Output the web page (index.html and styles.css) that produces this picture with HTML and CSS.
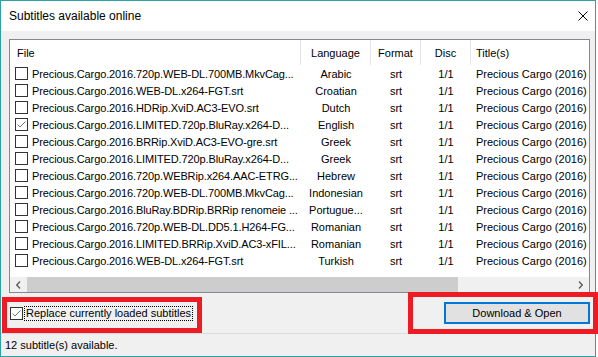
FILE: index.html
```
<!DOCTYPE HTML>
<html>
<head>
<meta http-equiv="Content-Type" content="text/html; charset=utf-8">
<title>Subtitles available online</title>
<link rel="stylesheet" href="styles.css">
</head>

<body>
<div id="window">
	<div id="titlebar">
		<span class="title">Subtitles available online</span>
		<svg class="close" width="10" height="10" viewBox="0 0 10 10"><path d="M0.5 0.5L9.5 9.5M9.5 0.5L0.5 9.5" stroke="#000" stroke-width="1" fill="none"/></svg>
	</div>
	<div id="content">
		<div id="list">
			<div class="head">
				<div class="c1">File</div>
				<div class="c2">Language</div>
				<div class="c3">Format</div>
				<div class="c4">Disc</div>
				<div class="c5">Title(s)</div>
			</div>
			<div class="rows">
				<div class="row"><div class="c1"><span class="box"></span><span class="name">Precious.Cargo.2016.720p.WEB-DL.700MB.MkvCag...</span></div><div class="c2">Arabic</div><div class="c3">srt</div><div class="c4">1/1</div><div class="c5">Precious Cargo (2016)</div></div>
				<div class="row"><div class="c1"><span class="box"></span><span class="name">Precious.Cargo.2016.WEB-DL.x264-FGT.srt</span></div><div class="c2">Croatian</div><div class="c3">srt</div><div class="c4">1/1</div><div class="c5">Precious Cargo (2016)</div></div>
				<div class="row"><div class="c1"><span class="box"></span><span class="name">Precious.Cargo.2016.HDRip.XviD.AC3-EVO.srt</span></div><div class="c2">Dutch</div><div class="c3">srt</div><div class="c4">1/1</div><div class="c5">Precious Cargo (2016)</div></div>
				<div class="row"><div class="c1"><span class="box"><svg width="11" height="11" viewBox="0 0 11 11"><path d="M1.5 5.5L4 8L9.5 2.5" stroke="#777" stroke-width="1" fill="none"/></svg></span><span class="name">Precious.Cargo.2016.LIMITED.720p.BluRay.x264-D...</span></div><div class="c2">English</div><div class="c3">srt</div><div class="c4">1/1</div><div class="c5">Precious Cargo (2016)</div></div>
				<div class="row"><div class="c1"><span class="box"></span><span class="name">Precious.Cargo.2016.BRRip.XviD.AC3-EVO-gre.srt</span></div><div class="c2">Greek</div><div class="c3">srt</div><div class="c4">1/1</div><div class="c5">Precious Cargo (2016)</div></div>
				<div class="row"><div class="c1"><span class="box"></span><span class="name">Precious.Cargo.2016.LIMITED.720p.BluRay.x264-D...</span></div><div class="c2">Greek</div><div class="c3">srt</div><div class="c4">1/1</div><div class="c5">Precious Cargo (2016)</div></div>
				<div class="row"><div class="c1"><span class="box"></span><span class="name">Precious.Cargo.2016.720p.WEBRip.x264.AAC-ETRG...</span></div><div class="c2">Hebrew</div><div class="c3">srt</div><div class="c4">1/1</div><div class="c5">Precious Cargo (2016)</div></div>
				<div class="row"><div class="c1"><span class="box"></span><span class="name">Precious.Cargo.2016.720p.WEB-DL.700MB.MkvCag...</span></div><div class="c2">Indonesian</div><div class="c3">srt</div><div class="c4">1/1</div><div class="c5">Precious Cargo (2016)</div></div>
				<div class="row"><div class="c1"><span class="box"></span><span class="name">Precious.Cargo.2016.BluRay.BDRip.BRRip renomeie ...</span></div><div class="c2">Portugue...</div><div class="c3">srt</div><div class="c4">1/1</div><div class="c5">Precious Cargo (2016)</div></div>
				<div class="row"><div class="c1"><span class="box"></span><span class="name">Precious.Cargo.2016.720p.WEB-DL.DD5.1.H264-FG...</span></div><div class="c2">Romanian</div><div class="c3">srt</div><div class="c4">1/1</div><div class="c5">Precious Cargo (2016)</div></div>
				<div class="row"><div class="c1"><span class="box"></span><span class="name">Precious.Cargo.2016.LIMITED.BRRip.XviD.AC3-xFIL...</span></div><div class="c2">Romanian</div><div class="c3">srt</div><div class="c4">1/1</div><div class="c5">Precious Cargo (2016)</div></div>
				<div class="row"><div class="c1"><span class="box"></span><span class="name">Precious.Cargo.2016.WEB-DL.x264-FGT.srt</span></div><div class="c2">Turkish</div><div class="c3">srt</div><div class="c4">1/1</div><div class="c5">Precious Cargo (2016)</div></div>
			</div>
			<div class="hscroll">
				<div class="arrow"><svg width="5" height="8" viewBox="0 0 5 8"><path d="M4 0.5L0.8 4L4 7.5" stroke="#606060" stroke-width="1.4" fill="none"/></svg></div>
				<div class="thumb"></div>
				<div class="track"></div>
				<div class="arrow"><svg width="5" height="8" viewBox="0 0 5 8"><path d="M1 0.5L4.2 4L1 7.5" stroke="#606060" stroke-width="1.4" fill="none"/></svg></div>
			</div>
		</div>
		<div id="panel">
			<div class="replace">
				<span class="box"><svg width="11" height="11" viewBox="0 0 11 11"><path d="M1.5 5.5L4 8L9.5 2.5" stroke="#777" stroke-width="1" fill="none"/></svg></span>
				<span class="label">Replace currently loaded subtitles</span>
			</div>
			<div class="btn">Download &amp; Open</div>
		</div>
	</div>
	<div id="status">12 subtitle(s) available.</div>
	<div class="mark markLeft"></div>
	<div class="mark markRight"></div>
</div>
</body>
</html>
```

FILE: styles.css
```
/* reset start */
html,body{ margin:0; padding:0; background:#fff;}
body{ font:11px "Liberation Sans", Arial, sans-serif; color:#000;}
/* reset end */

/* frame start */
#window{ width:596px; height:357px; box-sizing:border-box; border:1px solid #2ba1a6; display:flex; flex-direction:column; position:relative; background:#f0f0f0;}
#titlebar{ height:30px; flex:none; background:#fff; display:flex; align-items:center; justify-content:space-between; padding:0 7px 0 8px;}
#titlebar .title{ font-size:12px;}
#content{ flex:none; height:302px; box-sizing:border-box; padding:8px 5px 0 8px; display:flex; flex-direction:column;}
#status{ flex:1; border-top:1px solid #dadada; padding-left:4px; display:flex; align-items:center;}
/* frame end */

/* list start */
#list{ height:254px; flex:none; box-sizing:border-box; border:1px solid #828790; background:#fff; display:flex; flex-direction:column; overflow:hidden;}
#list .head{ height:25px; flex:none; display:flex; align-items:center;}
#list .head > div{ height:100%; display:flex; align-items:center; box-sizing:border-box; border-right:1px solid #e5e5e5;}
#list .rows{ flex:1;}
#list .row{ height:17px; display:flex; align-items:center; white-space:nowrap;}
#list .c1{ width:291px; flex:none; display:flex; align-items:center; overflow:hidden;}
#list .c2{ width:70px; flex:none; justify-content:center; text-align:center;}
#list .c3{ width:50px; flex:none; justify-content:center; text-align:center;}
#list .c4{ width:50px; flex:none; justify-content:center; text-align:center;}
#list .c5{ flex:none; width:140px; padding-left:5px; box-sizing:border-box;}
#list .head .c1{ padding-left:7px;}
#list .head .c5{ border-right:none;}
#list .row .c1{ padding-left:5px; box-sizing:border-box;}
#list .row .c1 .name{ margin-left:4px; flex:1; min-width:0; overflow:hidden; text-overflow:ellipsis; letter-spacing:-0.12px;}
.box{ width:13px; height:13px; flex:none; box-sizing:border-box; border:1px solid #333; background:#fff; display:flex; align-items:center; justify-content:center;}
#list .hscroll{ height:15px; flex:none; display:flex; background:#f0f0f0;}
#list .hscroll .arrow{ width:17px; display:flex; align-items:center; justify-content:center;}
#list .hscroll .thumb{ width:431px; background:#cdcdcd;}
#list .hscroll .track{ flex:1;}
/* list end */

/* panel start */
#panel{ height:40px; display:flex; align-items:center; justify-content:space-between;}
#panel .replace{ display:flex; align-items:center; padding-left:1px;}
#panel .label{ margin-left:1px; border:1px dotted #000; padding:0 1px; line-height:13px;}
#panel .btn{ width:146px; height:22px; box-sizing:border-box; border:1px solid #0078d7; box-shadow:inset 0 0 0 1px #0078d7; background:#e1e1e1; display:flex; align-items:center; justify-content:center; margin-bottom:1px;}
/* panel end */

/* marks start */
.mark{ position:absolute; box-sizing:border-box; border:5px solid #ed1c24;}
.markLeft{ left:1px; top:296px; width:200px; height:36px;}
.markRight{ left:407px; top:291px; width:190px; height:42px;}
/* marks end */
```
